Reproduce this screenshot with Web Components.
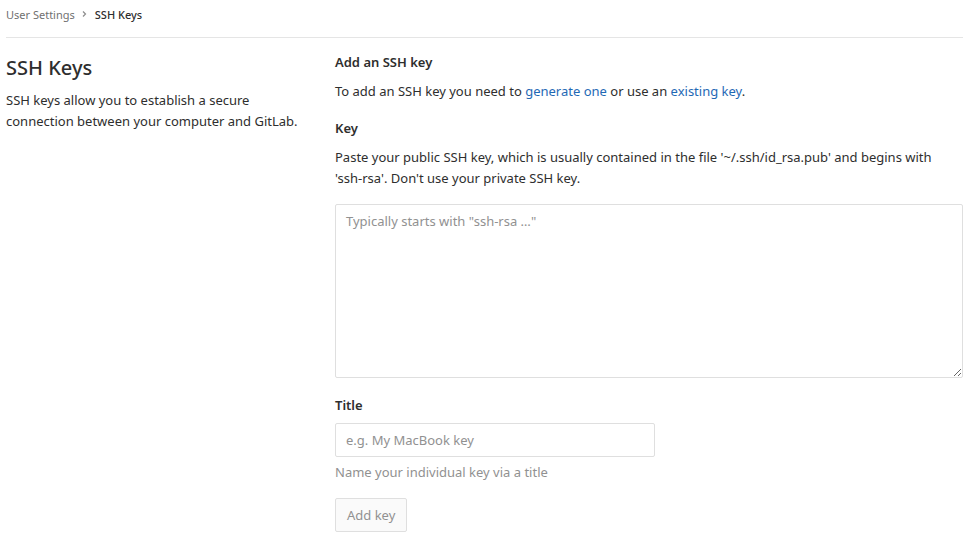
<!DOCTYPE html>
<html lang="en">
<head>
<meta charset="utf-8">
<title>SSH Keys</title>
<style>
  body {
    margin: 0;
    font: 13px/21px "Segoe UI", "Noto Sans", sans-serif;
    color: #2e2e2e;
    background: #fff;
    --muted: #919191;
    --border: #dfdfdf;
    --link: #1f69b5;
  }
</style>
</head>
<body>
<ssh-keys-page></ssh-keys-page>
<script>
const define = (name, markup) => {
  const template = document.createElement('template');
  template.innerHTML = markup;
  customElements.define(name, class extends HTMLElement {
    constructor() {
      super();
      this.attachShadow({ mode: 'open' }).append(template.content.cloneNode(true));
    }
  });
};

define('page-breadcrumb', `
  <style>
    :host { display: block; border-bottom: 1px solid #e5e5e5; font-size: 11px; }
    nav { display: flex; align-items: center; padding: 4px 0 12px; }
    a { color: #707070; text-decoration: none; }
    svg { width: 5px; height: 8px; margin: 0 8px 2px 7px; }
    span { font-weight: 500; }
  </style>
  <nav aria-label="Breadcrumb">
    <a href="#settings">User Settings</a>
    <svg viewBox="0 0 5 8" fill="none" stroke="#8c8c8c" stroke-width="1.2" aria-hidden="true"><path d="M1 1.5l2.5 2.5-2.5 2.5"/></svg>
    <span aria-current="page">SSH Keys</span>
  </nav>`);

define('settings-section', `
  <style>
    :host { display: grid; grid-template-columns: minmax(0, 1fr) minmax(0, 2fr); gap: 15px; padding-top: 14px; }
    h1 { margin: 2px 0 9px; font-size: 20px; line-height: 27px; font-weight: 500; }
    p { margin: 0; }
  </style>
  <header><h1><slot name="title"></slot></h1><p><slot name="description"></slot></p></header>
  <div><slot></slot></div>`);

define('ssh-key-form', `
  <style>
    :host { display: block; }
    h2, label { display: block; margin: 0; font: inherit; font-weight: 600; }
    p { margin: 8px 0 16px; }
    a { color: var(--link); text-decoration: none; }
    .term { white-space: nowrap; }
    textarea, input, button {
      box-sizing: border-box; border: 1px solid var(--border); border-radius: 2px;
      margin: 0; font: inherit; color: inherit; background: #fff;
    }
    textarea { display: block; width: 100%; height: 174px; padding: 6px 10px; resize: both; max-width: 100%; }
    input { display: block; width: 320px; max-width: 100%; height: 34px; padding: 6px 10px; margin-top: 7px; }
    ::placeholder { color: var(--muted); opacity: 1; }
    #key-help { margin-bottom: 15px; }
    .title { margin-top: 17px; }
    #title-help { margin: 5px 0 15px; color: var(--muted); }
    button { height: 34px; padding: 0 11px; background: #fafafa; color: var(--muted); }
  </style>
  <form>
    <h2>Add an SSH key</h2>
    <p>To add an SSH key you need to <a href="#generate">generate one</a> or use an <a href="#existing">existing key</a>.</p>
    <label for="key">Key</label>
    <p id="key-help">Paste your public SSH key, which is usually contained in the file '~/.ssh/id_rsa.pub' and begins with <span class="term">'ssh-rsa'.</span> Don't use your private SSH key.</p>
    <textarea id="key" aria-describedby="key-help" placeholder='Typically starts with "ssh-rsa …"'></textarea>
    <label class="title" for="title">Title</label>
    <input id="title" type="text" aria-describedby="title-help" placeholder="e.g. My MacBook key">
    <p id="title-help">Name your individual key via a title</p>
    <button type="submit" disabled>Add key</button>
  </form>`);

define('ssh-keys-page', `
  <style>:host { display: block; padding: 0 11px 6px 6px; }</style>
  <page-breadcrumb></page-breadcrumb>
  <main>
    <settings-section>
      <span slot="title">SSH Keys</span>
      <span slot="description">SSH keys allow you to establish a secure connection between your computer and GitLab.</span>
      <ssh-key-form></ssh-key-form>
    </settings-section>
  </main>`);
</script>
</body>
</html>
